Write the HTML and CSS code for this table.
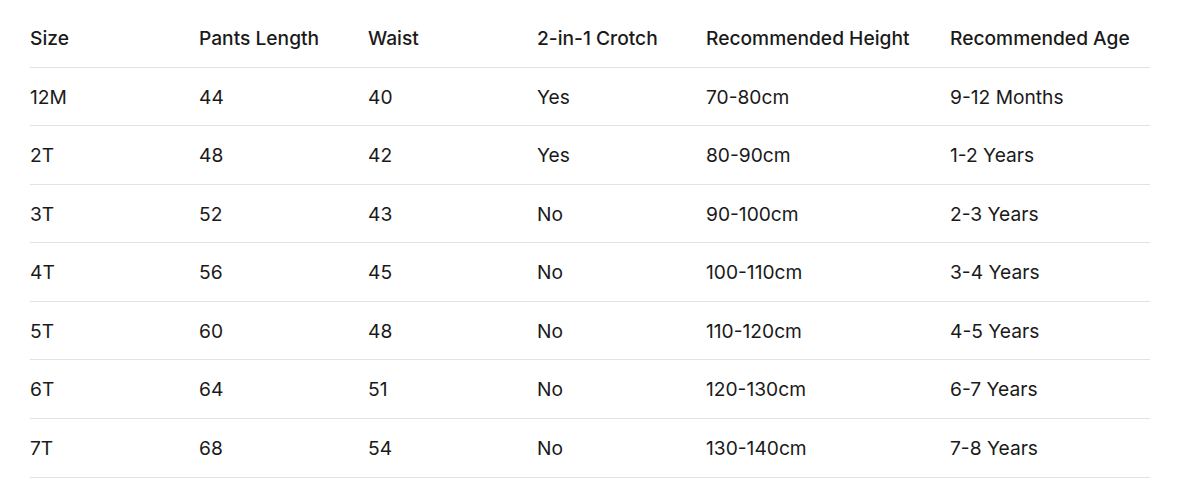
FILE: index.html
```html
<!DOCTYPE html>
<html>
<head>
<meta charset="utf-8">
<link rel="stylesheet" href="styles.css">
</head>
<body>
<div class="wrap">
<table class="size-table">
  <colgroup>
    <col class="c1"><col class="c2"><col class="c3"><col class="c4"><col class="c5"><col class="c6">
  </colgroup>
  <thead>
    <tr><th>Size</th><th>Pants Length</th><th>Waist</th><th>2-in-1 Crotch</th><th>Recommended Height</th><th>Recommended Age</th></tr>
  </thead>
  <tbody>
    <tr><td>12M</td><td>44</td><td>40</td><td>Yes</td><td>70-80cm</td><td>9-12 Months</td></tr>
    <tr><td>2T</td><td>48</td><td>42</td><td>Yes</td><td>80-90cm</td><td>1-2 Years</td></tr>
    <tr><td>3T</td><td>52</td><td>43</td><td>No</td><td>90-100cm</td><td>2-3 Years</td></tr>
    <tr><td>4T</td><td>56</td><td>45</td><td>No</td><td>100-110cm</td><td>3-4 Years</td></tr>
    <tr><td>5T</td><td>60</td><td>48</td><td>No</td><td>110-120cm</td><td>4-5 Years</td></tr>
    <tr><td>6T</td><td>64</td><td>51</td><td>No</td><td>120-130cm</td><td>6-7 Years</td></tr>
    <tr><td>7T</td><td>68</td><td>54</td><td>No</td><td>130-140cm</td><td>7-8 Years</td></tr>
  </tbody>
</table>
</div>
</body>
</html>
```
FILE: styles.css
```css
html, body {
  margin: 0;
  padding: 0;
  background: #ffffff;
}
.wrap {
  padding: 9px 27px 0 30px;
}
.size-table {
  width: 1120px;
  border-collapse: collapse;
  table-layout: fixed;
  font-family: Inter, "Noto Sans", sans-serif;
  font-size: 19.2px;
  line-height: 28px;
  color: #1a1a1a;
}
.c1, .c2, .c3, .c4 { width: 169px; }
.c5 { width: 244px; }
.c6 { width: 200px; }
.size-table th,
.size-table td {
  text-align: left;
  padding: 15px 0 14.57px 0;
  border-bottom: 1px solid #e3e3e3;
  white-space: nowrap;
}
.size-table th {
  font-weight: 500;
}
.size-table td {
  font-weight: 400;
}
```
